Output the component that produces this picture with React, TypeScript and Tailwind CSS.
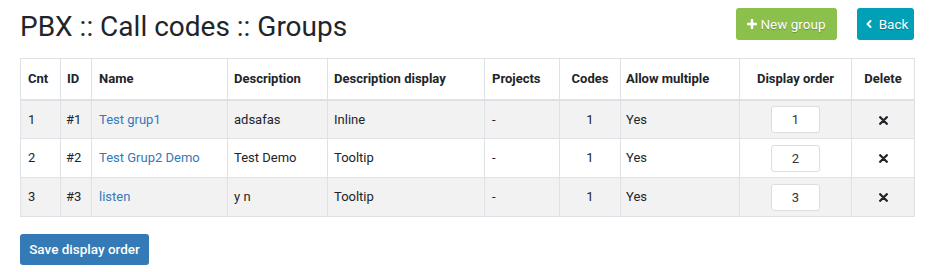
import { ChevronLeft } from "lucide-react";

type Group = {
  cnt: number;
  id: string;
  name: string;
  description: string;
  display: string;
  projects: string;
  codes: number;
  multiple: string;
  order: number;
};

const groups: Group[] = [
  { cnt: 1, id: "#1", name: "Test grup1", description: "adsafas", display: "Inline", projects: "-", codes: 1, multiple: "Yes", order: 1 },
  { cnt: 2, id: "#2", name: "Test Grup2 Demo", description: "Test Demo", display: "Tooltip", projects: "-", codes: 1, multiple: "Yes", order: 2 },
  { cnt: 3, id: "#3", name: "listen", description: "y n", display: "Tooltip", projects: "-", codes: 1, multiple: "Yes", order: 3 },
];

const widths = [40, 31, 136, 100, 157, 75, 61, 119, 112, 63];

const TimesIcon = () => (
  <svg width="9" height="9" viewBox="0 0 9 9" className="inline-block">
    <path d="M1.2 1.2L7.8 7.8M7.8 1.2L1.2 7.8" stroke="#212529" strokeWidth="2.3" strokeLinecap="round" />
  </svg>
);

const PlusIcon = () => (
  <svg width="10" height="10" viewBox="0 0 10 10">
    <path d="M5 0.8V9.2M0.8 5H9.2" stroke="white" strokeWidth="2.4" strokeLinecap="round" />
  </svg>
);

const App = () => {
  return (
    <div className="min-h-[272px] bg-white pl-5 pr-4 pt-2 font-['Roboto',sans-serif] text-[13px] text-[#212529]">
      {/* Header */}
      <div className="flex h-8 items-center justify-between">
        <h1 className="mt-[6px] text-[28px] font-normal leading-none text-[#212529]">
          PBX :: Call codes :: Groups
        </h1>
        <div className="flex gap-5">
          <button className="flex h-8 w-[101px] items-center justify-center gap-[3px] rounded-[3px] bg-[#8bc04c] text-[13.5px] text-white [text-shadow:0_1px_1px_rgba(0,0,0,0.25)]">
            <PlusIcon />
            New group
          </button>
          <button className="flex h-8 w-[57px] items-center justify-center gap-[4px] rounded-[3px] bg-[#00a1b6] text-[13.5px] text-white [text-shadow:0_1px_1px_rgba(0,0,0,0.25)]">
            <ChevronLeft size={12} strokeWidth={4} />
            Back
          </button>
        </div>
      </div>

      {/* Table */}
      <table className="mt-[18px] w-[894px] table-fixed border-collapse border border-[#dee2e6]">
        <colgroup>
          {widths.map((w, i) => (
            <col key={i} style={{ width: w }} />
          ))}
        </colgroup>
        <thead>
          <tr className="h-[41px] border-b-2 border-[#dee2e6] font-bold">
            <th className="border border-[#dee2e6] px-[7px] text-left">Cnt</th>
            <th className="border border-[#dee2e6] px-[6px] text-left">ID</th>
            <th className="border border-[#dee2e6] px-[7px] text-left">Name</th>
            <th className="border border-[#dee2e6] px-[6px] text-left">Description</th>
            <th className="border border-[#dee2e6] px-[6px] text-left">Description display</th>
            <th className="border border-[#dee2e6] px-[7px] text-left">Projects</th>
            <th className="border border-[#dee2e6] px-[6px] text-center">Codes</th>
            <th className="border border-[#dee2e6] px-[5px] text-left">Allow multiple</th>
            <th className="border border-[#dee2e6] px-[6px] text-center">Display order</th>
            <th className="border border-[#dee2e6] px-[6px] text-center">Delete</th>
          </tr>
        </thead>
        <tbody>
          {groups.map((g, i) => (
            <tr key={g.id} className={`h-[39px] ${i % 2 === 0 ? "bg-[#f2f2f2]" : "bg-white"}`}>
              <td className="border border-[#dee2e6] px-[7px]">{g.cnt}</td>
              <td className="border border-[#dee2e6] px-[5px]">{g.id}</td>
              <td className="border border-[#dee2e6] px-[7px]">
                <a href="#" className="text-[#3579b8]">
                  {g.name}
                </a>
              </td>
              <td className="border border-[#dee2e6] px-[6px]">{g.description}</td>
              <td className="border border-[#dee2e6] px-[6px]">{g.display}</td>
              <td className="border border-[#dee2e6] px-[7px]">{g.projects}</td>
              <td className="border border-[#dee2e6] px-[6px] text-center">{g.codes}</td>
              <td className="border border-[#dee2e6] px-[5px]">{g.multiple}</td>
              <td className="border border-[#dee2e6] px-[6px] text-center">
                <input
                  type="text"
                  defaultValue={g.order}
                  className="h-[27px] w-[49px] rounded-[3px] border border-[#dddddd] bg-white text-center text-[13px] text-[#333]"
                />
              </td>
              <td className="border border-[#dee2e6] px-[6px] text-center">
                <TimesIcon />
              </td>
            </tr>
          ))}
        </tbody>
      </table>

      <button className="mt-[17px] h-[31px] w-[129px] rounded-[3px] bg-[#337ab7] text-[13.5px] font-medium text-white">
        Save display order
      </button>
    </div>
  );
};

export default App;
